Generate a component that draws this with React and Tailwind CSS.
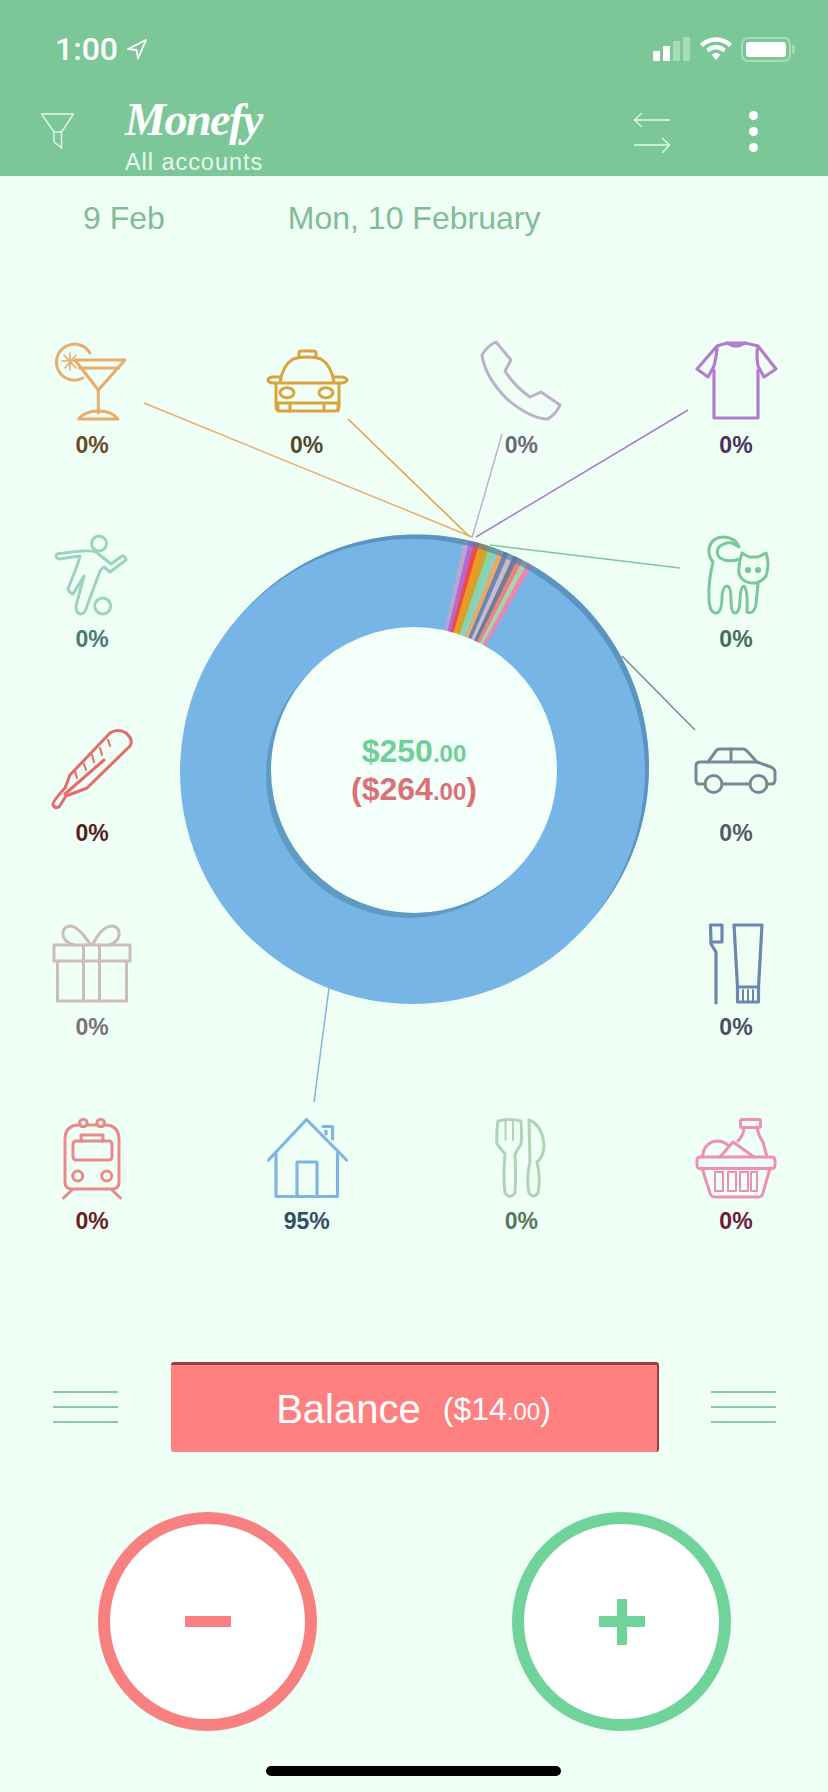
import React from "react";

const Svg = ({ color, sw = 3, children }) => (
  <svg width="80" height="80" viewBox="0 0 80 80" fill="none" stroke={color} strokeWidth={sw} strokeLinejoin="round" strokeLinecap="round" className="overflow-visible block">
    {children}
  </svg>
);

const Cocktail = () => (
  <Svg color="#e8ac6d">
    <path d="M38 13 A18 18 0 1 0 31 38" />
    <path d="M23 20 H73 L46.3 50 Z" />
    <path d="M27.5 28 H67" />
    <path d="M46.3 50 V73" />
    <path d="M26.5 79 Q33 71 46.3 71 Q60 71 66 79 Z" />
    <path d="M18 13 V30 M10 21 H26 M12 15 L24 28 M24 15 L13 28" strokeWidth="1.6" />
  </Svg>
);
const Taxi = () => (
  <Svg color="#d9a440">
    <path d="M32 17 V13 Q32 11 34 11 H47 Q49 11 49 13 V17" />
    <path d="M13 42 Q16 25 26 19 Q32 17 40 17 Q48 17 54 19 Q64 25 67 42" />
    <path d="M13 37 H5 Q1 38 1 40 Q1 42 5 43 H9 M67 37 H75 Q80 38 80 40 Q80 42 75 43 H72" />
    <path d="M9 43 H72 V66 Q72 71 68 71 H13 Q9 71 9 66 Z" />
    <path d="M10 63 H72" />
    <path d="M11 71 V65 M23 71 V64 M57 71 V64 M71 71 V65" />
    <ellipse cx="20" cy="52.7" rx="7" ry="5" />
    <ellipse cx="59" cy="52.7" rx="7" ry="5" />
  </Svg>
);
const Phone = () => (
  <Svg color="#bcb0cc">
    <path d="M15 2 L30 20 L24 31 Q34 47 49 57 L60 52 L79 65 Q75 74 67 79 Q50 79 26 59 Q4 37 1 15 Q6 6 15 2Z" />
  </Svg>
);
const Shirt = () => (
  <Svg color="#b47cd0" sw="3.2">
    <path d="M18 78 H62 V30 M18 78 V30" />
    <path d="M21 6 L31 3 Q40 9 49 3 L62 6 L80 29 L68 37 L62 26 Q60 14 62 6 M21 6 L1 29 L12 37 L18 26 Q21 14 21 6" />
    <path d="M31 3 H49" />
  </Svg>
);
const Soccer = () => (
  <Svg color="#9cd2c0">
    <circle cx="47" cy="9.5" r="7.5" />
    <circle cx="50.7" cy="72" r="8" />
    <path d="M5 20 Q3 24 7 25 L28 22 Q26 30 23 37 L16 55 Q17 59 21 60 L32 42 L24 72 Q24 80 29 80 Q33 80 35 72 L48 37 Q50 34 52 33 L58 38 L74 26 Q74 22 70 22 L59 30 L44 18 Q38 15 5 20Z" />
  </Svg>
);
const Cat = () => (
  <Svg color="#7cc79a">
    <path d="M44 25 Q32 29 24 24 Q19 19 23 13 Q29 8 36 9 L43 13 Q40 4 28 3 Q16 3 13 14 Q12 22 17 28 Q12 48 13 66 Q14 79 20 79 Q26 79 26 62 Q27 52 31 52 Q35 52 35 66 Q35 79 39 79 Q44 79 44 64 Q45 52 48 52 Q52 56 51 78 Q58 81 60 70 L62 50" />
    <path d="M46 19 L53 23 H62 L70 19 Q74 30 70 42 Q64 50 55 49 Q46 48 43 40 Q42 30 46 19Z" />
    <circle cx="52" cy="36" r="1.6" fill="#7cc79a" />
    <circle cx="62" cy="36" r="1.6" fill="#7cc79a" />
  </Svg>
);
const Thermo = () => (
  <Svg color="#e56a6a">
    <path d="M58 5 Q66 0 74 5 Q82 12 78 18 L35 60 L14 68 L7 79 Q3 81 1 77 Q0 74 13 60 L18 47 Z" />
    <path d="M13 66 L52 32" />
    <path d="M23 43 L25 50 M32 36 L34 42 M40 27 L42 34 M48 20 L50 27 M56 12 L58 18" strokeWidth="2" />
  </Svg>
);
const Car = () => (
  <Svg color="#7d8696">
    <path d="M9 56 H3 Q0 56 0 52 V38 Q0 34 4 34 H12 L20 23 Q21 21 24 21 H47 Q49 21 51 23 L61 34 L75 39 Q79 41 79 44 V52 Q79 56 75 56 H71 M26 56 H54" />
    <path d="M12 34 H61 M35 21 V34" />
    <circle cx="17.5" cy="56" r="8.5" />
    <circle cx="62.5" cy="56" r="8.5" />
  </Svg>
);
const Gift = () => (
  <Svg color="#c9bdc2">
    <rect x="2" y="23" width="76" height="16" />
    <path d="M5.5 39 V79 H74.5 V39" />
    <path d="M31.5 23 V79 M47.5 23 V79" />
    <path d="M38 22 Q26 4 18 4 Q10 5 11 13 Q12 20 22 23 M41 22 Q50 4 60 4 Q68 5 67 13 Q66 20 57 23" />
  </Svg>
);
const Brush = () => (
  <Svg color="#6c87ac" sw="3.2">
    <path d="M14.5 3 H26 V20 H15 Z" />
    <path d="M15 20 V22 L20 30 V81" />
    <path d="M38 3 H66 L62.5 65 H41.5 Z" />
    <path d="M41.5 65 V80 H62.5 V65" />
    <path d="M47 68 V79 M52 68 V79 M57 68 V79" strokeWidth="2" />
  </Svg>
);
const Train = () => (
  <Svg color="#e88a8a">
    <path d="M13 24 Q13 9 27 9 H53 Q67 9 67 24 V66 Q67 73 60 73 H20 Q13 73 13 66 Z" />
    <circle cx="31.3" cy="7" r="3.8" fill="#f0fff6" />
    <circle cx="48.7" cy="7" r="3.8" fill="#f0fff6" />
    <rect x="21" y="25" width="39" height="19" rx="3" />
    <path d="M29 25 V19 H51 V25" />
    <circle cx="25.7" cy="60" r="5" />
    <circle cx="54.7" cy="60" r="5" />
    <path d="M11.5 82 L20 74 M68.5 82 L60 74" />
  </Svg>
);
const House = () => (
  <Svg color="#7fb5e0" sw="3.2">
    <path d="M1.5 44 L39.5 3.5 L79.5 44" />
    <path d="M9 37 V80.5 H70.5 V37" />
    <path d="M30 80 V46 H50 V80" />
    <path d="M56 10.5 H65.5 V23 M59 15 V18" />
  </Svg>
);
const Cutlery = () => (
  <Svg color="#acd4b5">
    <path d="M17 5 Q28 2 40 5 Q41 20 40 28 L34 38 Q35 60 34 77 Q29 84 24 77 Q22 60 24 38 L16 28 Q15 18 17 5Z" />
    <path d="M24.5 5 V24 M32 5 V24" strokeWidth="2" />
    <path d="M48 4 Q62 10 63 30 Q63 40 56 46 Q60 62 57 77 Q52 83 48 77 Q45 62 49 46 Z" />
  </Svg>
);
const Basket = () => (
  <Svg color="#ef8fb4">
    <rect x="1" y="41" width="78" height="11.5" rx="3" />
    <path d="M6 52 L14 77 Q15 81 19 81 H62 Q66 81 67 77 L74 52" />
    <path d="M19 56 H27 V75 H19 Z M32 56 H40 V75 H32 Z M44 56 H52 V75 H44 Z M55 56 H61 V75 H55 Z" strokeWidth="2" />
    <rect x="44.5" y="3.5" width="20" height="8" rx="1.5" />
    <path d="M48 11 Q48 19 42 25 M61 11 Q62 19 67 26 L71 41" />
    <path d="M6.5 41 Q8 26 21 25 Q28 25 33 30" />
    <path d="M24 41 L37 26 L58 41" />
  </Svg>
);

const Cell = ({ Icon, pct, cls }) => (
  <div className="flex flex-col items-center h-[194px]">
    <div className="w-[80px] h-[80px]"><Icon /></div>
    <div className={`mt-[11px] h-[28px] leading-[28px] text-[23px] font-bold ${cls}`}>{pct}</div>
  </div>
);

const sliceColors = ["#b9a7cc", "#b768d8", "#ee4a4a", "#f09a1a", "#d8a02f", "#85d6a0", "#8cd0c0", "#f0a860", "#6c86b0", "#c8bccc", "#6f7d93", "#ef8080", "#a5d5ac", "#ee85ac"];
const pt = (r, deg) => {
  const a = (deg * Math.PI) / 180;
  return `${(414 + r * Math.sin(a)).toFixed(2)} ${(770 - r * Math.cos(a)).toFixed(2)}`;
};
const slicePath = (a0, a1) => `M${pt(238, a0)} A238 238 0 0 1 ${pt(238, a1)} L${pt(140, a1)} A140 140 0 0 0 ${pt(140, a0)} Z`;
const leaders = [
  ["#e8ac6d", 144, 403, 472, 537],
  ["#d9a440", 348, 419, 470, 537],
  ["#bcb0cc", 502, 434, 472, 538],
  ["#a87cc8", 688, 410, 476, 537],
  ["#7cc79a", 680, 568, 490, 545],
  ["#7d8696", 695, 730, 622, 656],
  ["#7fb5e0", 314, 1102, 329, 988],
];

const Donut = () => (
  <svg width="828" height="1792" viewBox="0 0 828 1792" className="absolute left-0 top-0 pointer-events-none">
    <defs>
      <clipPath id="ring"><circle cx="416.5" cy="767" r="232.5" /></clipPath>
    </defs>
    <circle cx="416.5" cy="767" r="232.5" fill="#76b5e5" />
    <circle cx="412.5" cy="771.5" r="232.5" fill="#76b5e5" />
    <g clipPath="url(#ring)">
      {sliceColors.map((c, i) => (
        <path key={c} d={slicePath(12.3 + i * 1.26, 12.3 + (i + 1) * 1.26 + 0.05)} fill={c} />
      ))}
      <path fillRule="evenodd" d="M150 500 H680 V1040 H150 Z M180 771.5 A232.5 232.5 0 1 0 645 771.5 A232.5 232.5 0 1 0 180 771.5 Z" fill="#4b7fa8" fillOpacity="0.62" />
    </g>
    <circle cx="409" cy="775" r="143" fill="#5f9ac4" />
    <circle cx="414" cy="770" r="143" fill="#f3fff9" />
    {leaders.map(([c, x1, y1, x2, y2]) => (
      <line key={c} x1={x1} y1={y1} x2={x2} y2={y2} stroke={c} strokeWidth="1.5" />
    ))}
  </svg>
);

const Lines = () => (
  <div className="w-[65px] flex flex-col gap-[13px]">
    <div className="h-[2px] bg-[#8cc9a2]" />
    <div className="h-[2px] bg-[#8cc9a2]" />
    <div className="h-[2px] bg-[#8cc9a2]" />
  </div>
);

export default function App() {
  return (
    <div className="relative w-[828px] h-[1792px] overflow-hidden flex flex-col bg-[#f0fff6] font-['Liberation_Sans',Arial,sans-serif]">
      <Donut />
      <header className="relative h-[176px] shrink-0 bg-[#7bc797] overflow-hidden text-white">
        <div className="flex items-center h-[98px] pl-[55px] pr-[33px]">
          <span className="font-['Roboto',sans-serif] font-medium text-[32px] leading-none">1:00</span>
          <svg width="22" height="22" viewBox="0 0 22 22" fill="none" stroke="white" strokeWidth="1.8" strokeLinejoin="round" className="ml-[8px]">
            <path d="M20 2 L2 11 L10.5 12 L12 20.5 Z" />
          </svg>
          <div className="ml-auto flex items-center">
            <div className="flex items-end gap-[3px] h-[24px]">
              <div className="w-[7px] h-[10px] rounded-[1px] bg-white" />
              <div className="w-[7px] h-[15px] rounded-[1px] bg-white" />
              <div className="w-[7px] h-[20px] rounded-[1px] bg-[#a6dcba]" />
              <div className="w-[7px] h-[24px] rounded-[1px] bg-[#a6dcba]" />
            </div>
            <svg width="32" height="24" viewBox="0 0 33 24" fill="white" className="ml-[10px]">
              <path d="M16.5 0 C10 0 4.5 2.5 0 6.5 L3 10 C6.5 6.6 11.2 4.6 16.5 4.6 C21.8 4.6 26.5 6.6 30 10 L33 6.5 C28.5 2.5 23 0 16.5 0 Z" />
              <path d="M16.5 8 C12.5 8 9 9.5 6.2 12.2 L9.2 15.5 C11.2 13.6 13.7 12.6 16.5 12.6 C19.3 12.6 21.8 13.6 23.8 15.5 L26.8 12.2 C24 9.5 20.5 8 16.5 8 Z" />
              <path d="M16.5 16 C14.8 16 13.2 16.6 12 17.7 L16.5 23.5 L21 17.7 C19.8 16.6 18.2 16 16.5 16 Z" />
            </svg>
            <div className="ml-[9px] flex items-center">
              <div className="w-[50px] h-[25px] rounded-[7px] border-2 border-[#a6dcba] p-[3px]">
                <div className="w-full h-full rounded-[3px] bg-white" />
              </div>
              <div className="w-[3px] h-[9px] rounded-r-[2px] bg-[#a6dcba] ml-[1px]" />
            </div>
          </div>
        </div>
        <div className="flex h-[78px] pl-[41px] pr-[70px]">
          <svg width="33" height="36" viewBox="0 0 33 36" fill="none" stroke="#e6f6ec" strokeWidth="1.4" className="mt-[15px]">
            <path d="M0.5 1 H32.5 L20.5 19 V35 L13 29 V19 Z" />
            <path d="M13 19 H20.5" />
          </svg>
          <div className="ml-[51px] flex flex-col">
            <span className="font-['Liberation_Serif',serif] italic font-bold text-[46px] leading-[54px] h-[54px] -mt-[5px] tracking-[-1.5px]">Monefy</span>
            <span className="text-[23.5px] leading-[28px] tracking-[0.95px] text-[#e8f8ee] mt-[1px]">All accounts</span>
          </div>
          <svg width="38" height="42" viewBox="0 0 38 42" fill="none" stroke="#e6f6ec" strokeWidth="1.3" className="ml-auto mt-[14px]">
            <path d="M37 8 H1.5 M9 1 L1.5 8 L9 15" />
            <path d="M1 33 H36.5 M29 26 L36.5 33 L29 41" />
          </svg>
          <div className="ml-[78px] mt-[13px] flex flex-col gap-[7px]">
            <div className="w-[9px] h-[9px] rounded-full bg-white" />
            <div className="w-[9px] h-[9px] rounded-full bg-white" />
            <div className="w-[9px] h-[9px] rounded-full bg-white" />
          </div>
        </div>
      </header>

      <div className="relative h-[84px] shrink-0 flex items-center pl-[83px] text-[32px] text-[#83bb98]">
        <span>9 Feb</span>
        <span className="ml-[123px]">Mon, 10 February</span>
      </div>

      <main className="relative mt-[80px] mx-[52px] grid grid-cols-[repeat(4,80px)] justify-between">
        <Cell Icon={Cocktail} pct="0%" cls="text-[#6a4a2a]" />
        <Cell Icon={Taxi} pct="0%" cls="text-[#4f4a30]" />
        <Cell Icon={Phone} pct="0%" cls="text-[#6c6a78]" />
        <Cell Icon={Shirt} pct="0%" cls="text-[#4a3060]" />

        <Cell Icon={Soccer} pct="0%" cls="text-[#4a7a70]" />
        <div className="col-span-2" />
        <Cell Icon={Cat} pct="0%" cls="text-[#3f6f55]" />

        <Cell Icon={Thermo} pct="0%" cls="text-[#5a1e1e]" />
        <div className="col-span-2 relative">
          <div className="absolute left-[47px] right-[47px] top-[4px] flex flex-col items-center font-bold">
            <div className="h-[38px] leading-[38px] text-[32px] text-[#6fcf98]">$250<span className="text-[24px]">.00</span></div>
            <div className="h-[38px] leading-[38px] text-[32px] text-[#dd6f76]">($264<span className="text-[24px]">.00</span>)</div>
          </div>
        </div>
        <Cell Icon={Car} pct="0%" cls="text-[#555a64]" />

        <Cell Icon={Gift} pct="0%" cls="text-[#7a7278]" />
        <div className="col-span-2" />
        <Cell Icon={Brush} pct="0%" cls="text-[#46505e]" />

        <Cell Icon={Train} pct="0%" cls="text-[#6a1f1f]" />
        <Cell Icon={House} pct="95%" cls="text-[#2f4f68]" />
        <Cell Icon={Cutlery} pct="0%" cls="text-[#4f7a5c]" />
        <Cell Icon={Basket} pct="0%" cls="text-[#6b1a3a]" />
      </main>

      <section className="relative mt-[52px] h-[90px] shrink-0 flex items-center justify-between pl-[53px] pr-[52px]">
        <Lines />
        <div className="w-[488px] h-[90px] rounded-[3px] bg-[#ff8080] border-t-[3px] border-r-[2px] border-[#9c3c40] flex items-center justify-center text-white">
          <span className="text-[40px]">Balance</span>
          <span className="ml-[22px] text-[32px]">($14<span className="text-[24px]">.00</span>)</span>
        </div>
        <Lines />
      </section>

      <section className="relative mt-[60px] shrink-0 h-[219px] flex pl-[98px]">
        <div className="w-[219px] h-[219px] rounded-full bg-white border-[12px] border-[#f98080] flex items-center justify-center">
          <div className="w-[46px] h-[11px] bg-[#f98080]" />
        </div>
        <div className="relative ml-[195px] w-[219px] h-[219px] rounded-full bg-white border-[12px] border-[#6fd39a] flex items-center justify-center">
          <div className="w-[46px] h-[11px] bg-[#6fd39a]" />
          <div className="absolute w-[10px] h-[46px] bg-[#6fd39a]" />
        </div>
      </section>

      <div className="relative mt-[35px] ml-[266px] w-[295px] h-[10px] rounded-full bg-black shrink-0" />
    </div>
  );
}
